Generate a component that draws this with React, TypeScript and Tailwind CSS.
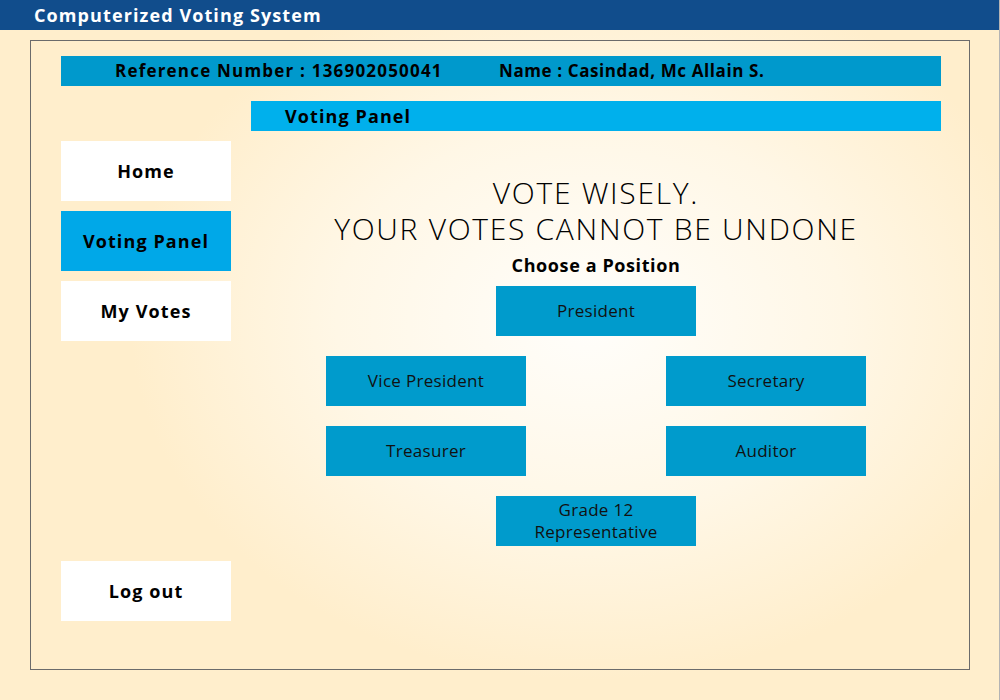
import React from 'react';

// Sidebar navigation entries
const NAV = [
  { label: 'Home', active: false },
  { label: 'Voting Panel', active: true },
  { label: 'My Votes', active: false },
];

const PositionButton: React.FC<{ children: React.ReactNode }> = ({ children }) => (
  <button className="w-[200px] h-[50px] bg-[#009bcc] text-[#111] text-[17px] leading-[22px] tracking-[0.3px] flex items-center justify-center text-center">
    {children}
  </button>
);

const NavButton: React.FC<{ label: string; active?: boolean }> = ({ label, active }) => (
  <button
    className={
      active
        ? 'w-[170px] h-[60px] bg-[#00a8e8] text-black text-[18px] font-bold tracking-[1.1px] flex items-center justify-center'
        : 'w-[170px] h-[60px] bg-white text-black text-[18px] font-bold tracking-[1.1px] flex items-center justify-center'
    }
  >
    {label}
  </button>
);

export default function App() {
  return (
    <div
      className="w-[1000px] h-[700px] overflow-hidden flex flex-col border-r border-[#b4b4b4] bg-[radial-gradient(ellipse_460px_360px_at_590px_320px,#fffefb_0%,#fff7e6_55%,#ffeecc_100%)]"
      style={{ fontFamily: '"Open Sans", "Noto Sans", sans-serif' }}
    >
      {/* Title bar */}
      <div className="h-[30px] bg-[#114d8c] flex items-center pl-[34px]">
        <span className="text-white text-[18px] font-bold tracking-[1.1px]">Computerized Voting System</span>
      </div>

      {/* Main frame */}
      <div className="ml-[30px] mt-[10px] w-[940px] h-[630px] border border-[#6b6b6b] pt-[15px] pl-[30px]">
        {/* Reference bar */}
        <div className="w-[880px] h-[30px] bg-[#0099cc] flex items-center text-[17px] font-bold text-black">
          <span className="ml-[54px] w-[384px] tracking-[1.2px]">Reference Number : 136902050041</span>
          <span className="tracking-[0.6px]">Name : Casindad, Mc Allain S.</span>
        </div>

        <div className="flex">
          {/* Sidebar */}
          <div className="w-[170px] pt-[55px] flex flex-col">
            <div className="flex flex-col gap-[10px]">
              {NAV.map(n => (
                <NavButton key={n.label} label={n.label} active={n.active} />
              ))}
            </div>
            <div className="mt-[220px]">
              <NavButton label="Log out" />
            </div>
          </div>

          {/* Content */}
          <div className="ml-[20px] w-[690px] pt-[15px] flex flex-col">
            <div className="h-[30px] bg-[#00b0ec] flex items-center pl-[34px] text-[18px] font-bold tracking-[1.1px] text-black">
              Voting Panel
            </div>

            <div className="mt-[44px] flex flex-col items-center text-black">
              <div className="text-center text-[30px] font-light leading-[36px] tracking-[1.7px]">
                VOTE WISELY.
                <br />
                YOUR VOTES CANNOT BE UNDONE
              </div>
              <div className="mt-[6px] text-[18px] font-bold leading-[24px] tracking-[0.6px]">Choose a Position</div>
            </div>

            <div className="mt-[9px] flex flex-col items-center gap-[20px]">
              <PositionButton>President</PositionButton>
              <div className="w-[540px] flex justify-between">
                <PositionButton>Vice President</PositionButton>
                <PositionButton>Secretary</PositionButton>
              </div>
              <div className="w-[540px] flex justify-between">
                <PositionButton>Treasurer</PositionButton>
                <PositionButton>Auditor</PositionButton>
              </div>
              <PositionButton>
                Grade 12
                <br />
                Representative
              </PositionButton>
            </div>
          </div>
        </div>
      </div>
    </div>
  );
}
